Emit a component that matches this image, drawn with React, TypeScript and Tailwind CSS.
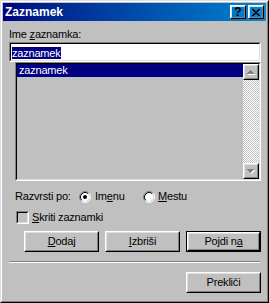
import React from "react";

function Raised({ children, className = "" }: { children?: React.ReactNode; className?: string }) {
  return (
    <div className={`border border-t-white border-l-white border-r-black border-b-black ${className}`}>
      <div className="w-full h-full border border-t-[#dfdfdf] border-l-[#dfdfdf] border-r-[#808080] border-b-[#808080] flex items-center justify-center">
        {children}
      </div>
    </div>
  );
}

function Sunken({ children, className = "", inner = "" }: { children?: React.ReactNode; className?: string; inner?: string }) {
  return (
    <div className={`border border-t-[#808080] border-l-[#808080] border-r-white border-b-white ${className}`}>
      <div className={`w-full h-full border border-t-black border-l-black border-r-[#dfdfdf] border-b-[#dfdfdf] ${inner}`}>
        {children}
      </div>
    </div>
  );
}

function Btn({ children, def = false }: { children: React.ReactNode; def?: boolean }) {
  if (def) {
    return (
      <div className="w-[75px] h-[21px] border border-black">
        <Raised className="w-full h-full">{children}</Raised>
      </div>
    );
  }
  return <Raised className="w-[75px] h-[21px]">{children}</Raised>;
}

function Radio({ checked }: { checked?: boolean }) {
  return (
    <svg width="12" height="12" viewBox="0 0 12 12" className="shrink-0">
      <circle cx="6" cy="6" r="4.5" fill="#fff" />
      <path d="M2.11 9.89A5.5 5.5 0 0 1 9.89 2.11" stroke="#808080" fill="none" />
      <path d="M2.82 9.18A4.5 4.5 0 0 1 9.18 2.82" stroke="#000" fill="none" />
      <path d="M9.89 2.11A5.5 5.5 0 0 1 2.11 9.89" stroke="#fff" fill="none" />
      <path d="M9.18 2.82A4.5 4.5 0 0 1 2.82 9.18" stroke="#dfdfdf" fill="none" />
      {checked && <circle cx="6" cy="6" r="2" fill="#000" />}
    </svg>
  );
}

function Arrow({ up }: { up?: boolean }) {
  const rows = up
    ? [
        [5, 4, 1],
        [4, 5, 3],
        [3, 6, 5],
        [2, 7, 7],
      ]
    : [
        [2, 4, 7],
        [3, 5, 5],
        [4, 6, 3],
        [5, 7, 1],
      ];
  return (
    <svg width="12" height="12" viewBox="0 0 12 12" shapeRendering="crispEdges">
      {rows.map(([x, y, w], i) => (
        <rect key={"s" + i} x={x + 1} y={y + 1} width={w} height={1} fill="#fff" />
      ))}
      {rows.map(([x, y, w], i) => (
        <rect key={"m" + i} x={x} y={y} width={w} height={1} fill="#808080" />
      ))}
    </svg>
  );
}

function CloseGlyph() {
  const px: [number, number][] = [];
  const pattern = ["XX....XX", ".XX..XX.", "..XXXX..", "...XX...", "..XXXX..", ".XX..XX.", "XX....XX"];
  pattern.forEach((r, y) =>
    r.split("").forEach((c, x) => {
      if (c === "X") px.push([x, y]);
    })
  );
  return (
    <svg width="8" height="7" viewBox="0 0 8 7" shapeRendering="crispEdges">
      {px.map(([x, y], i) => (
        <rect key={i} x={x} y={y} width={1} height={1} fill="#000" />
      ))}
    </svg>
  );
}

export default function App() {
  return (
    <div className="w-[269px] h-[303px] bg-[#c0c0c0] border border-t-[#dfdfdf] border-l-[#dfdfdf] border-r-black border-b-black font-['Liberation_Sans',Arial,sans-serif] text-[11px] leading-[13px] text-black tracking-[-0.2px]">
      <div className="h-full border border-t-white border-l-white border-r-[#808080] border-b-[#808080] p-px flex flex-col">
        {/* Title bar */}
        <div className="h-[18px] shrink-0 bg-linear-to-r from-[#000080] to-[#1084d0] flex items-center pl-[2px] pr-[2px]">
          <span className="flex-1 text-white font-bold text-[12px] leading-[18px] tracking-normal">Zaznamek</span>
          <div className="flex gap-[2px]">
            <Raised className="w-[16px] h-[14px]">
              <span className="font-bold text-[12px] leading-[10px] tracking-normal">?</span>
            </Raised>
            <Raised className="w-[16px] h-[14px]">
              <CloseGlyph />
            </Raised>
          </div>
        </div>

        {/* Content */}
        <div className="flex flex-col">
          <div className="mt-[7px] ml-[6px] h-[13px]">
            Ime <u>z</u>aznamka:
          </div>

          <Sunken className="mt-[1px] ml-[6px] w-[252px] h-[20px]" inner="bg-white pt-[3px] pl-px">
            <span className="bg-[#000080] text-white inline-block leading-[12px] h-[12px]">zaznamek</span>
          </Sunken>

          <Sunken className="ml-[12px] w-[246px] h-[119px]" inner="bg-[#c0c0c0] flex">
            <div className="flex-1">
              <div className="h-[13px] bg-[#000080] text-white pl-[2px]">zaznamek</div>
            </div>
            <div className="w-[16px] flex flex-col">
              <Raised className="w-[16px] h-[16px] bg-[#c0c0c0]">
                <Arrow up />
              </Raised>
              <div className="flex-1 bg-[image:repeating-conic-gradient(#c0c0c0_0%_25%,#ffffff_0%_50%)] bg-size-[2px_2px]" />
              <Raised className="w-[16px] h-[16px] bg-[#c0c0c0]">
                <Arrow />
              </Raised>
            </div>
          </Sunken>

          <div className="mt-[9px] ml-[12px] h-[13px] flex items-center">
            <span className="w-[64px]">Razvrsti po:</span>
            <div className="w-[64px] flex items-center gap-[4px]">
              <Radio checked />
              <span>
                Im<u>e</u>nu
              </span>
            </div>
            <div className="flex items-center gap-[3px]">
              <Radio />
              <span>
                <u>M</u>estu
              </span>
            </div>
          </div>

          <div className="mt-[8px] ml-[13px] h-[13px] flex items-center gap-[3px]">
            <Sunken className="w-[13px] h-[13px]" inner="bg-[#c0c0c0]" />
            <span>
              <u>S</u>kriti zaznamki
            </span>
          </div>

          <div className="mt-[7px] ml-[21px] flex gap-[6px]">
            <Btn>
              <span>
                <u>D</u>odaj
              </span>
            </Btn>
            <Btn>
              <span>
                <u>I</u>zbriši
              </span>
            </Btn>
            <Btn def>
              <span>
                Pojdi n<u>a</u>
              </span>
            </Btn>
          </div>

          <div className="mt-[9px] ml-[6px] w-[251px] h-[2px] border-t border-t-[#808080] border-b border-b-white" />

          <div className="mt-[9px] ml-[183px]">
            <Btn>
              <span>Prekliči</span>
            </Btn>
          </div>
        </div>
      </div>
    </div>
  );
}
